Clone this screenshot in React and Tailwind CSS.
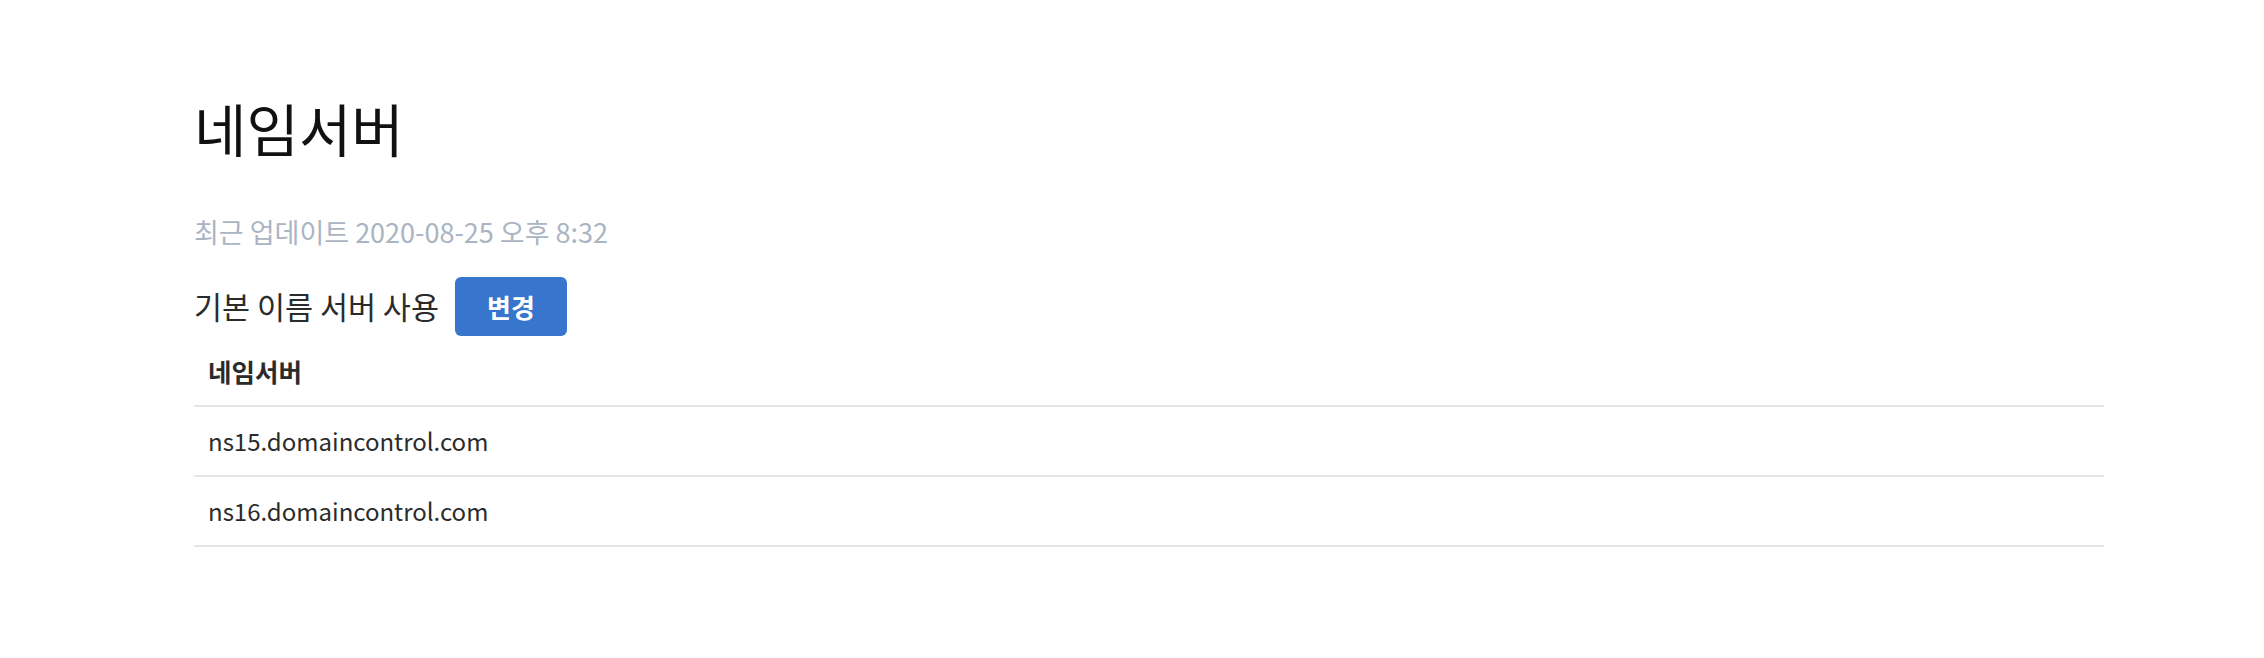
import React from "react";

const servers = ["ns15.domaincontrol.com", "ns16.domaincontrol.com"];

const App = () => {
  return (
    <div
      className="min-h-[658px] bg-white text-[#2b2b2b] pl-[194px] pr-[160px] pt-[93px]"
      style={{ fontFamily: '"Noto Sans CJK KR", "Noto Sans", sans-serif' }}
    >
      <h1 className="text-[57px] leading-[1.2] font-normal text-[#111]">네임서버</h1>

      <p className="mt-[53px] text-[27px] leading-[1.3] text-[#aab4c2]">
        최근 업데이트 2020-08-25 오후 8:32
      </p>

      <div className="mt-[28px] flex items-center gap-[16px]">
        <span className="text-[30.5px] leading-[1.3]">기본 이름 서버 사용</span>
        <button className="w-[112px] h-[59px] rounded-[6px] bg-[#3776cc] text-white text-[26px] font-bold">
          변경
        </button>
      </div>

      <table className="w-full border-collapse text-[24px]">
        <thead>
          <tr className="border-b-2 border-[#e6e6e6]">
            <th className="h-[70px] px-[14px] text-left text-[25.5px] font-bold">네임서버</th>
          </tr>
        </thead>
        <tbody>
          {servers.map((s) => (
            <tr key={s} className="border-b-2 border-[#e6e6e6]">
              <td className="h-[70px] px-[14px]">{s}</td>
            </tr>
          ))}
        </tbody>
      </table>
    </div>
  );
};

export default App;
